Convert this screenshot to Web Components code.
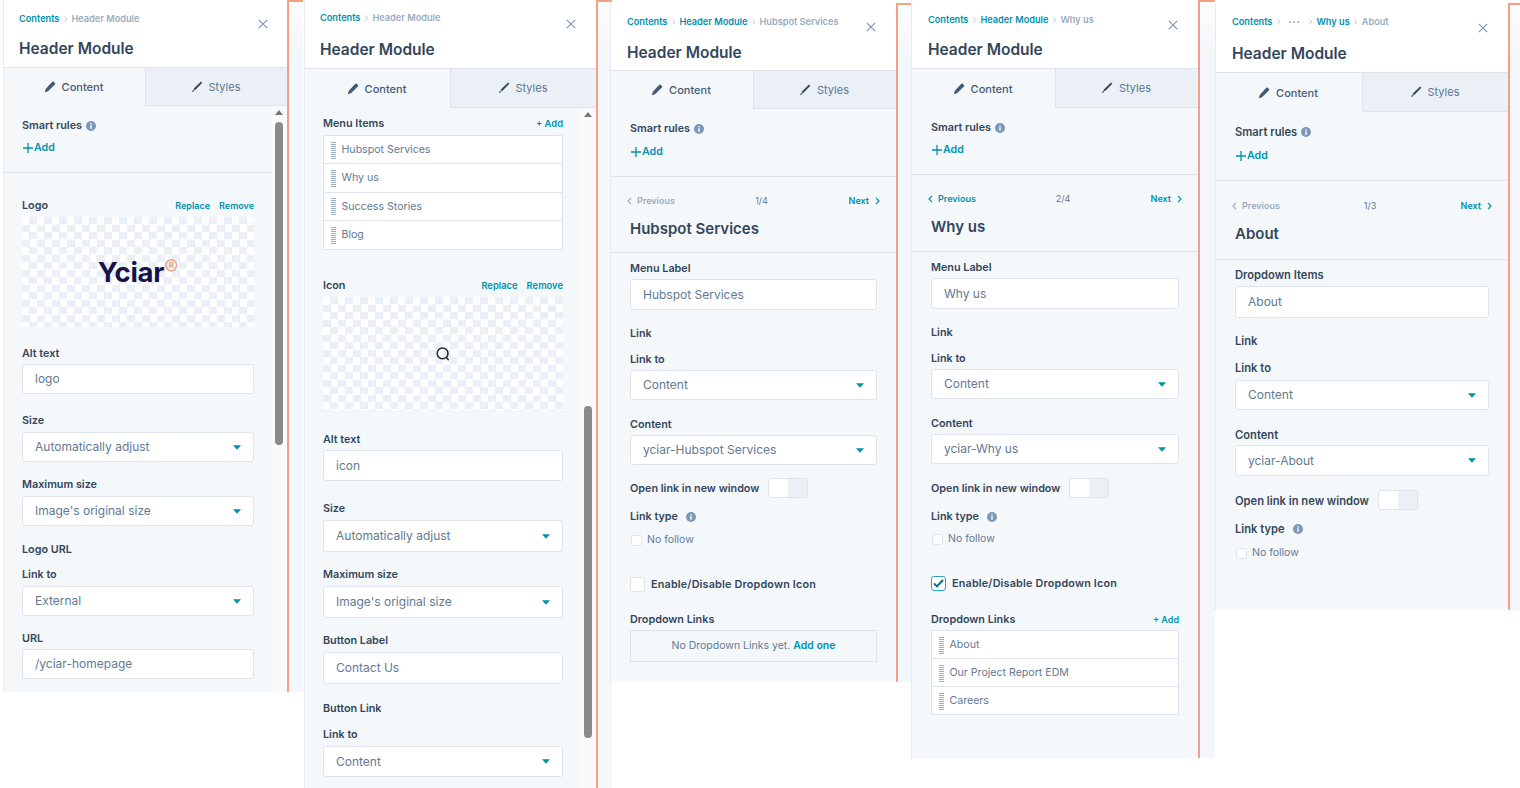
<!DOCTYPE html>
<html>
<head>
<meta charset="utf-8">
<title>Header Module</title>
<style>
  html, body { margin: 0; height: 100%; background: #fff; overflow: hidden; }
  body { font-family: Inter, "Liberation Sans", sans-serif; color: #33475b; }
  .canvas { position: relative; width: 1520px; height: 788px; }
  .canvas > hs-panel { position: absolute; }
</style>
</head>
<body>
<div class="canvas">

  <hs-panel style="left:4px;top:0;width:283px;height:692px;--strip:14px;--crumb-top:12px;--title-gap:12px;--head-h:68px;--tab-h:38px;--tab-w:141px;--pl:18px;--pr:33px;--close-top:18px;--close-right:18px;">
    <hs-crumbs slot="crumbs" items="Contents|Header Module"></hs-crumbs>
    <hs-section line style="--pt:13px;--pb:18px;margin-right:15px;--pr:18px;">
      <hs-smart-rules gap="7"></hs-smart-rules>
    </hs-section>
    <hs-section>
      <hs-row label="Logo" style="margin-top:25px"><hs-links>Replace|Remove</hs-links></hs-row>
      <hs-picture style="margin-top:5px;height:110px"><hs-logo>Yciar</hs-logo></hs-picture>
      <hs-field label="Alt text" style="margin-top:19px"><hs-input value="logo"></hs-input></hs-field>
      <hs-field label="Size" style="margin-top:19px;--gap:5px"><hs-input select value="Automatically adjust"></hs-input></hs-field>
      <hs-field label="Maximum size" style="margin-top:15px;--gap:5px"><hs-input select value="Image's original size"></hs-input></hs-field>
      <hs-field label="Logo URL" style="margin-top:16px"></hs-field>
      <hs-field label="Link to" style="margin-top:11px;--gap:5px"><hs-input select value="External"></hs-input></hs-field>
      <hs-field label="URL" style="margin-top:15px"><hs-input value="/yciar-homepage"></hs-input></hs-field>
    </hs-section>
    <hs-scrollbar slot="scroll" style="--thumb-top:16px;--thumb-h:323px"></hs-scrollbar>
  </hs-panel>

  <hs-panel style="left:305px;top:0;width:291px;height:788px;--strip:14px;--crumb-top:11px;--title-gap:14px;--head-h:69px;--tab-h:39px;--tab-w:145px;--pl:18px;--pr:33px;--close-top:18px;--close-right:19px;--link:9.4px;">
    <hs-crumbs slot="crumbs" items="Contents|Header Module"></hs-crumbs>
    <hs-section>
      <hs-row label="Menu Items" style="margin-top:8px"><hs-links small>+ Add</hs-links></hs-row>
      <hs-list style="margin-top:5px;--row:28.25px;--row-pt:1px">
        <hs-list-item>Hubspot Services</hs-list-item>
        <hs-list-item>Why us</hs-list-item>
        <hs-list-item>Success Stories</hs-list-item>
        <hs-list-item>Blog</hs-list-item>
      </hs-list>
      <hs-row label="Icon" style="margin-top:28px"><hs-links>Replace|Remove</hs-links></hs-row>
      <hs-picture style="margin-top:5px;height:114px">
        <svg width="16" height="16" viewBox="0 0 16 16" fill="none" stroke="#1c2430" stroke-width="1.5"><circle cx="7.6" cy="7.4" r="5.4"/><path d="M11.4 11.4l2.3 2.8"/></svg>
      </hs-picture>
      <hs-field label="Alt text" style="margin-top:21px;--h:31px"><hs-input value="icon"></hs-input></hs-field>
      <hs-field label="Size" style="margin-top:20px;--gap:5px;--h:32px"><hs-input select value="Automatically adjust"></hs-input></hs-field>
      <hs-field label="Maximum size" style="margin-top:15px;--gap:5px;--h:32px"><hs-input select value="Image's original size"></hs-input></hs-field>
      <hs-field label="Button Label" style="margin-top:15px;--gap:5px;--h:32px"><hs-input value="Contact Us"></hs-input></hs-field>
      <hs-field label="Button Link" style="margin-top:17px"></hs-field>
      <hs-field label="Link to" style="margin-top:12px;--gap:5px;--h:31px"><hs-input select value="Content"></hs-input></hs-field>
    </hs-section>
    <hs-scrollbar slot="scroll" style="--thumb-top:298px;--thumb-h:332px"></hs-scrollbar>
  </hs-panel>

  <hs-panel style="left:611px;top:3px;width:285px;height:679px;--strip:14px;--crumb-top:12px;--title-gap:13px;--head-h:68px;--tab-h:38px;--tab-w:142px;--pl:19px;--pr:19px;--close-top:18px;--close-right:19px;--head-pl:16px;">
    <hs-crumbs slot="crumbs" items="Contents|Header Module|Hubspot Services"></hs-crumbs>
    <hs-section line style="--pt:13px;--pb:18px"><hs-smart-rules gap="8"></hs-smart-rules></hs-section>
    <hs-section line style="--pb:13px">
      <hs-pager count="1/4" style="margin-top:17px"></hs-pager>
      <hs-subtitle style="margin-top:11px">Hubspot Services</hs-subtitle>
    </hs-section>
    <hs-section>
      <hs-field label="Menu Label" style="margin-top:8px;--h:31px"><hs-input value="Hubspot Services"></hs-input></hs-field>
      <hs-field label="Link" style="margin-top:16px"></hs-field>
      <hs-field label="Link to" style="margin-top:12px"><hs-input select value="Content"></hs-input></hs-field>
      <hs-field label="Content" style="margin-top:17px"><hs-input select value="yciar-Hubspot Services"></hs-input></hs-field>
      <hs-toggle label="Open link in new window" style="margin-top:13px"></hs-toggle>
      <hs-row label="Link type" info style="margin-top:11px"></hs-row>
      <hs-check label="No follow" style="margin-top:10px"></hs-check>
      <hs-check big label="Enable/Disable Dropdown Icon" style="margin-top:30px"></hs-check>
      <hs-field label="Dropdown Links" style="margin-top:20px"><hs-empty>No Dropdown Links yet. <b>Add one</b></hs-empty></hs-field>
    </hs-section>
  </hs-panel>

  <hs-panel style="left:912px;top:0;width:286px;height:758px;--strip:15px;--crumb-top:13px;--title-gap:12px;--head-h:69px;--tab-h:39px;--tab-w:143px;--pl:19px;--pr:19px;--close-top:19px;--close-right:19px;--head-pl:16px;">
    <hs-crumbs slot="crumbs" items="Contents|Header Module|Why us"></hs-crumbs>
    <hs-section line style="--pt:13px;--pb:18px"><hs-smart-rules gap="7"></hs-smart-rules></hs-section>
    <hs-section line style="--pb:14px">
      <hs-pager active count="2/4" style="margin-top:17px"></hs-pager>
      <hs-subtitle style="margin-top:11px">Why us</hs-subtitle>
    </hs-section>
    <hs-section>
      <hs-field label="Menu Label" style="margin-top:8px;--h:31px"><hs-input value="Why us"></hs-input></hs-field>
      <hs-field label="Link" style="margin-top:16px"></hs-field>
      <hs-field label="Link to" style="margin-top:12px"><hs-input select value="Content"></hs-input></hs-field>
      <hs-field label="Content" style="margin-top:17px"><hs-input select value="yciar-Why us"></hs-input></hs-field>
      <hs-toggle label="Open link in new window" style="margin-top:14px"></hs-toggle>
      <hs-row label="Link type" info style="margin-top:11px"></hs-row>
      <hs-check label="No follow" style="margin-top:9px"></hs-check>
      <hs-check big checked label="Enable/Disable Dropdown Icon" style="margin-top:30px"></hs-check>
      <hs-row label="Dropdown Links" style="margin-top:21px"><hs-links small>+ Add</hs-links></hs-row>
      <hs-list style="margin-top:4px;--row:27.8px;--row-pt:2px">
        <hs-list-item>About</hs-list-item>
        <hs-list-item>Our Project Report EDM</hs-list-item>
        <hs-list-item>Careers</hs-list-item>
      </hs-list>
    </hs-section>
  </hs-panel>

  <hs-panel style="left:1216px;top:3px;width:292px;height:607px;--strip:10px;--crumb-top:12px;--title-gap:14px;--head-h:70px;--tab-h:39px;--tab-w:146px;--pl:19px;--pr:19px;--close-top:19px;--close-right:19px;--head-pl:16px;--lab:11.2px;">
    <hs-crumbs slot="crumbs" items="Contents|•••|Why us|About"></hs-crumbs>
    <hs-section line style="--pt:13px;--pb:18px"><hs-smart-rules gap="9"></hs-smart-rules></hs-section>
    <hs-section line style="--pb:15px">
      <hs-pager count="1/3" style="margin-top:18px"></hs-pager>
      <hs-subtitle style="margin-top:11px">About</hs-subtitle>
    </hs-section>
    <hs-section>
      <hs-field label="Dropdown Items" style="margin-top:7px;--gap:5px;--h:32px"><hs-input value="About"></hs-input></hs-field>
      <hs-field label="Link" style="margin-top:15px"></hs-field>
      <hs-field label="Link to" style="margin-top:13px;--gap:6px"><hs-input select value="Content"></hs-input></hs-field>
      <hs-field label="Content" style="margin-top:17px;--h:31px"><hs-input select value="yciar-About"></hs-input></hs-field>
      <hs-toggle label="Open link in new window" style="margin-top:14px"></hs-toggle>
      <hs-row label="Link type" info style="margin-top:11px"></hs-row>
      <hs-check label="No follow" style="margin-top:11px"></hs-check>
    </hs-section>
  </hs-panel>

</div>

<script>
const TEAL = '#0091ae';
const INFO_ICON = `<svg width="10" height="10" viewBox="0 0 10 10"><circle cx="5" cy="5" r="5" fill="#7c98b6"/><rect x="4.3" y="4.2" width="1.4" height="3.6" fill="#fff"/><rect x="4.3" y="2.2" width="1.4" height="1.3" fill="#fff"/></svg>`;
const CHEV = `<svg width="5" height="8" viewBox="0 0 5 8" fill="none" stroke="currentColor" stroke-width="1.2"><path d="M1 .8L4 4 1 7.2"/></svg>`;

class ShadowEl extends HTMLElement {
    constructor() {
        super();
        this.attachShadow({ mode: 'open' });
    }
    connectedCallback() {
        this.shadowRoot.innerHTML = this.render();
    }
}

class HsPanel extends ShadowEl {
    render() {
        return `
        <style>
            :host { display: grid; grid-template-columns: 100% 2px var(--strip); box-sizing: border-box; }
            .main { display: flex; flex-direction: column; min-width: 0; height: 100%; background: #f5f8fb; box-shadow: -1px 0 0 #e6ecf3; }
            header { box-sizing: border-box; height: var(--head-h); flex: none; background: #fff; border-bottom: 1px solid #dfe3eb;
                     display: grid; grid-template-columns: 1fr auto; align-content: start; padding: var(--crumb-top) 0 0 var(--head-pl, 15px); }
            h1 { grid-column: 1; margin: var(--title-gap) 0 0; font: 600 15.5px/22px Inter, sans-serif; color: #33475b; }
            .close { grid-column: 2; grid-row: 1 / span 2; margin: calc(var(--close-top) - var(--crumb-top) + 1px) calc(var(--close-right) + 1px) 0 0; }
            .tabs { display: grid; grid-template-columns: var(--tab-w) 1fr; height: var(--tab-h); flex: none; font-size: 11px; }
            .tab { display: flex; align-items: center; justify-content: center; gap: 6px; color: #425b76; font-weight: 500; padding-right: 2px; }
            .tab.off { background: #eaf0f6; border-left: 1px solid #dfe3eb; border-bottom: 1px solid #dfe3eb; color: #5c7691; font-weight: 400; }
            .body { position: relative; flex: 1; overflow: hidden; }
            .edge { background: #f2a184; }
            .strip { border-top: 2px solid #f2a184; background: linear-gradient(#fbfcfd, #f3f6fa 60px); box-sizing: border-box; height: 100%; }
        </style>
        <div class="main">
            <header>
                <slot name="crumbs"></slot>
                <svg class="close" width="10" height="10" viewBox="0 0 10 10" stroke="#7c98b6" stroke-width="1.2"><path d="M.8.8l8.4 8.4M9.2.8L.8 9.2"/></svg>
                <h1>Header Module</h1>
            </header>
            <div class="tabs">
                <div class="tab">
                    <svg width="12" height="12" viewBox="0 0 12 12" fill="#425b76"><path d="M8.3.8a1 1 0 0 1 1.4 0l1.2 1.2a1 1 0 0 1 0 1.4L4 10.2.8 11.2l1-3.4z"/></svg>
                    <span>Content</span>
                </div>
                <div class="tab off">
                    <svg width="12" height="12" viewBox="0 0 12 12" fill="#33475b"><path d="M10 .6l1.3 1.2L4 9.2 2.6 7.8zM2.2 8.4l1.3 1.3-2.6 1.5z"/></svg>
                    <span>Styles</span>
                </div>
            </div>
            <div class="body"><slot></slot><slot name="scroll"></slot></div>
        </div>
        <div class="edge"></div>
        <div class="strip"></div>`;
    }
}

class HsCrumbs extends ShadowEl {
    render() {
        const items = this.getAttribute('items').split('|');
        const html = items.map((t, i) => {
            const last = i === items.length - 1 || t === '•••';
            return `<span class="${last ? 'off' : ''} ${t === '•••' ? 'dots' : ''}">${t}</span>`;
        }).join(`<i>${CHEV}</i>`);
        return `
        <style>
            :host { display: block; grid-column: 1; }
            div { display: flex; align-items: center; gap: 3.5px; height: 14px; font: 600 9.2px/14px Inter, sans-serif; color: ${TEAL}; }
            .off { color: #99acc2; }
            .dots { font-size: 6px; letter-spacing: 1px; color: #7c98b6; margin: 0 4px; }
            i { color: #b5c3d3; display: flex; transform: scale(.8); }
        </style>
        <div>${html}</div>`;
    }
}

class HsSection extends ShadowEl {
    render() {
        return `
        <style>
            :host { display: block; padding: var(--pt, 0) var(--pr) var(--pb, 0) var(--pl); }
            :host([line]) { border-bottom: 1px solid #dfe3eb; }
        </style>
        <slot></slot>`;
    }
}

// labels sit 1px lower than their 14px line box
const LABEL_CSS = `font: 600 var(--lab, 10.8px)/14px Inter, sans-serif; color: #33475b; padding-top: 1px; margin-bottom: -1px;`;

class HsSmartRules extends ShadowEl {
    render() {
        const gap = this.getAttribute('gap');
        return `
        <style>
            :host { display: block; }
            .l { font: 600 var(--lab, 10.8px)/14px Inter, sans-serif; color: #33475b; display: flex; align-items: center; gap: 4px; }
            .add { display: flex; align-items: center; gap: 1px; margin-top: ${Number(gap) + 1}px; margin-bottom: -1px; font: 600 10.6px/14px Inter, sans-serif; color: ${TEAL}; padding-left: 1px; }
        </style>
        <div class="l">Smart rules ${INFO_ICON}</div>
        <div class="add"><svg width="10" height="10" viewBox="0 0 10 10" stroke="${TEAL}" stroke-width="1.3"><path d="M5 0v10M0 5h10"/></svg>Add</div>`;
    }
}

class HsRow extends ShadowEl {
    render() {
        return `
        <style>
            :host { display: flex; justify-content: space-between; align-items: center; height: 14px; }
            .l { ${LABEL_CSS} display: flex; align-items: center; gap: 8px; }
        </style>
        <div class="l">${this.getAttribute('label')} ${this.hasAttribute('info') ? INFO_ICON : ''}</div>
        <slot></slot>`;
    }
}

class HsLinks extends ShadowEl {
    render() {
        const items = this.textContent.split('|');
        return `
        <style>
            :host { display: flex; gap: 9px; font: 600 var(--link, 9px)/14px Inter, sans-serif; color: ${TEAL}; padding-top: 1px; }
        </style>
        ${items.map(t => `<span>${t}</span>`).join('')}`;
    }
}

class HsPicture extends ShadowEl {
    render() {
        return `
        <style>
            :host { display: flex; align-items: center; justify-content: center;
                    background: repeating-conic-gradient(#eaf0f6 0 25%, #fff 0 50%) 0 0 / 15px 15px; }
        </style>
        <slot></slot>`;
    }
}

class HsLogo extends ShadowEl {
    render() {
        return `
        <style>
            :host { display: flex; align-items: flex-start; font: 700 27.5px/30px Inter, sans-serif; color: #14144a; letter-spacing: -.3px; margin-bottom: 1px; }
            span { font: 400 21px/22px Inter, sans-serif; color: #f2a184; margin: 0 0 0 0; letter-spacing: 0; }
        </style>
        <slot></slot><span>®</span>`;
    }
}

class HsField extends ShadowEl {
    render() {
        return `
        <style>
            :host { display: block; }
            .l { ${LABEL_CSS} }
            ::slotted(*) { margin-top: var(--gap, 4px); }
        </style>
        <div class="l">${this.getAttribute('label')}</div>
        <slot></slot>`;
    }
}

class HsInput extends ShadowEl {
    render() {
        const caret = this.hasAttribute('select')
            ? `<svg width="8" height="5" viewBox="0 0 8 5"><path d="M0 .3h8L4 4.7z" fill="${TEAL}"/></svg>` : '';
        return `
        <style>
            :host { display: flex; align-items: center; justify-content: space-between; box-sizing: border-box;
                    height: var(--h, 30px); background: #fff; border: 1px solid #dfe3eb; border-radius: 3px;
                    padding: 0 12px; font: 400 12px/14px Inter, sans-serif; color: #627a93; }
        </style>
        <span>${this.getAttribute('value')}</span>${caret}`;
    }
}

class HsList extends ShadowEl {
    render() {
        return `
        <style>
            :host { display: block; box-sizing: border-box; border: 1px solid #dfe3eb; background: #fff; }
            ::slotted(hs-list-item:not(:last-child)) { border-bottom: 1px solid #dfe3eb; }
        </style>
        <slot></slot>`;
    }
}

class HsListItem extends ShadowEl {
    render() {
        return `
        <style>
            :host { display: flex; align-items: center; gap: 5.5px; box-sizing: border-box; height: var(--row);
                    padding: var(--row-pt, 0) 0 0 7px; font: 400 10.6px/14px Inter, sans-serif; color: #627a93; }
            .grip { width: 5px; height: 17px; background: repeating-linear-gradient(#99acc2 0 1px, #fff 1px 2px); }
        </style>
        <span class="grip"></span><slot></slot>`;
    }
}

class HsPager extends ShadowEl {
    render() {
        const a = this.hasAttribute('active');
        const left = `<svg width="5" height="8" viewBox="0 0 5 8" fill="none" stroke="currentColor" stroke-width="1.2"><path d="M4 .8L1 4l3 3.2"/></svg>`;
        return `
        <style>
            :host { display: grid; grid-template-columns: 1fr auto 1fr; align-items: center; height: 14px; margin: 0 -3px;
                    font: 600 9px/14px Inter, sans-serif; color: #99acc2; }
            .p { display: flex; align-items: center; gap: 5px; color: ${a ? TEAL : '#99acc2'}; }
            .c { padding-left: 16px; font-weight: 400; color: #5c7691; }
            .n { display: flex; align-items: center; justify-content: flex-end; gap: 6px; color: ${TEAL}; }
        </style>
        <div class="p">${left}<span>Previous</span></div>
        <div class="c">${this.getAttribute('count')}</div>
        <div class="n"><span>Next</span>${CHEV}</div>`;
    }
}

class HsSubtitle extends ShadowEl {
    render() {
        return `
        <style>:host { display: block; font: 600 15px/20px Inter, sans-serif; color: #33475b; }</style>
        <slot></slot>`;
    }
}

class HsToggle extends ShadowEl {
    render() {
        return `
        <style>
            :host { display: flex; align-items: center; gap: 9px; height: 20px; }
            .l { ${LABEL_CSS} }
            .t { box-sizing: border-box; width: 40px; height: 20px; border: 1px solid #dfe3eb; border-radius: 3px; background: linear-gradient(90deg, #fff 50%, #eaf0f6 50%); }
        </style>
        <span class="l">${this.getAttribute('label')}</span><span class="t"></span>`;
    }
}

class HsCheck extends ShadowEl {
    render() {
        const big = this.hasAttribute('big');
        const on = this.hasAttribute('checked');
        const tick = on ? `<svg width="11" height="9" viewBox="0 0 11 9" fill="none" stroke="#00708a" stroke-width="2"><path d="M1 4.4l3 3 6-6.4"/></svg>` : '';
        return `
        <style>
            :host { display: flex; align-items: center; height: ${big ? 15 : 14}px; gap: ${big ? 6 : 5}px; }
            .b { box-sizing: border-box; width: ${big ? 15 : 11}px; height: ${big ? 15 : 11}px; margin-left: ${big ? 0 : 1}px; background: #fff;
                 border: ${on ? '1.5px solid #2aa7b8' : '1px solid #dfe3eb'}; border-radius: 3px; display: flex; align-items: center; justify-content: center; }
            .l { ${big ? 'font: 600 10.8px/14px Inter, sans-serif; color: #33475b; letter-spacing: .18px;' : 'font: 400 10.5px/14px Inter, sans-serif; color: #627a93;'} }
        </style>
        <span class="b">${tick}</span><span class="l">${this.getAttribute('label')}</span>`;
    }
}

class HsEmpty extends ShadowEl {
    render() {
        return `
        <style>
            :host { display: block; box-sizing: border-box; height: 32px; border: 1px solid #dfe3eb; text-align: center;
                    font: 400 10.5px/30px Inter, sans-serif; color: #627a93; }
            ::slotted(b) { color: ${TEAL}; font-weight: 600; }
        </style>
        <slot></slot>`;
    }
}

class HsScrollbar extends ShadowEl {
    render() {
        return `
        <style>
            :host { position: absolute; top: 0; right: 0; bottom: 0; width: 15px; background: #f9fafc; }
            .up { position: absolute; top: 4px; left: 3px; width: 0; height: 0; border: 4px solid transparent; border-top: 0; border-bottom: 5px solid #777; }
            .thumb { position: absolute; left: 3px; width: 8px; top: var(--thumb-top); height: var(--thumb-h); background: #8a8a8a; border-radius: 4px; }
        </style>
        <div class="up"></div><div class="thumb"></div>`;
    }
}

customElements.define('hs-panel', HsPanel);
customElements.define('hs-crumbs', HsCrumbs);
customElements.define('hs-section', HsSection);
customElements.define('hs-smart-rules', HsSmartRules);
customElements.define('hs-row', HsRow);
customElements.define('hs-links', HsLinks);
customElements.define('hs-picture', HsPicture);
customElements.define('hs-logo', HsLogo);
customElements.define('hs-field', HsField);
customElements.define('hs-input', HsInput);
customElements.define('hs-list', HsList);
customElements.define('hs-list-item', HsListItem);
customElements.define('hs-pager', HsPager);
customElements.define('hs-subtitle', HsSubtitle);
customElements.define('hs-toggle', HsToggle);
customElements.define('hs-check', HsCheck);
customElements.define('hs-empty', HsEmpty);
customElements.define('hs-scrollbar', HsScrollbar);
</script>
</body>
</html>
